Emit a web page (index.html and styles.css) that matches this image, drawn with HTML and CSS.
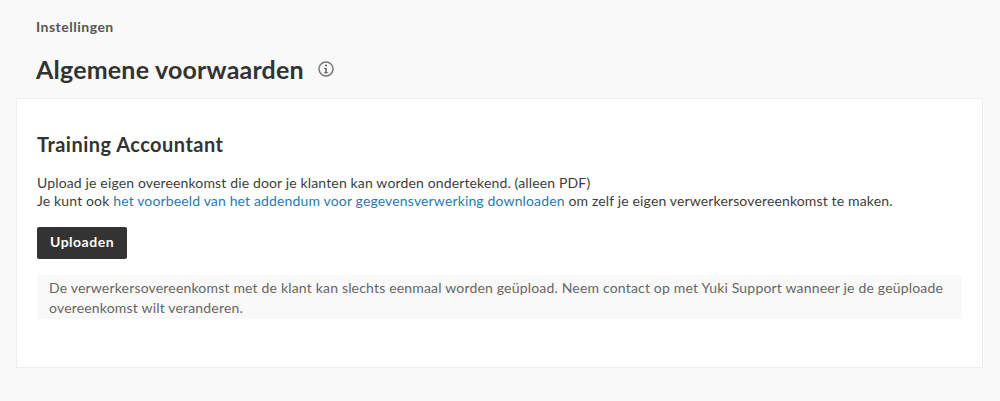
FILE: index.html
```html
<!DOCTYPE html>
<html lang="nl">
<head>
  <meta charset="UTF-8" />
  <title>Algemene voorwaarden</title>
  <link rel="stylesheet" href="styles.css">
</head>
<body>

<div class="crumb">Instellingen</div>

<div class="page-head">
  <h1>Algemene voorwaarden</h1>
  <svg class="info-icon" width="16" height="16" viewBox="0 0 16 16" aria-hidden="true">
    <circle cx="8" cy="8" r="7" fill="none" stroke="#777" stroke-width="1.5"/>
    <rect x="7" y="3.6" width="2" height="2" rx="1" fill="#555"/>
    <path d="M6.2 7h2.5v4.2h1.1v1H6.2v-1h1.1V8H6.2z" fill="#555"/>
  </svg>
</div>

<div class="card">
  <h2>Training Accountant</h2>
  <p class="intro">
    Upload je eigen overeenkomst die door je klanten kan worden ondertekend. (alleen PDF)<br>
    Je kunt ook <a href="#">het voorbeeld van het addendum voor gegevensverwerking downloaden</a> om zelf je eigen verwerkersovereenkomst te maken.
  </p>
  <button class="btn">Uploaden</button>
  <div class="notice">De verwerkersovereenkomst met de klant kan slechts eenmaal worden geüpload. Neem contact op met Yuki Support wanneer je de geüploade overeenkomst wilt veranderen.</div>
</div>

</body>
</html>
```

FILE: styles.css
```css
* {
  box-sizing: border-box;
}

body {
  margin: 0;
  padding: 17px 17px 0 16px;
  background-color: #f9f9f9;
  font-family: Lato, 'Noto Sans', sans-serif;
  font-size: 14px;
  color: #3d3d3d;
}

.crumb {
  margin-left: 20px;
  font-size: 14px;
  letter-spacing: 0.5px;
  line-height: 20px;
  font-weight: 700;
  color: #555;
}

.page-head {
  display: flex;
  align-items: center;
  gap: 14px;
  margin: 14px 0 11px 20px;
  height: 36px;
}

h1 {
  margin: 0;
  font-size: 25px;
  letter-spacing: 0.2px;
  font-weight: 700;
  color: #333;
}

.card {
  height: 270px;
  padding: 32px 20px 0;
  background-color: #fff;
  border: 1px solid #eee;
}

h2 {
  margin: 0 0 17px;
  font-size: 20px;
  letter-spacing: 0.47px;
  line-height: 26px;
  font-weight: 700;
  color: #333;
}

.intro {
  margin: 0 0 17px;
  line-height: 18px;
  letter-spacing: 0.145px;
}

.intro a {
  color: #2a7ab0;
  text-decoration: none;
}

.btn {
  display: block;
  width: 90px;
  height: 32px;
  padding: 0 0 3px;
  border: none;
  border-radius: 2px;
  background-color: #333;
  color: #fff;
  font-family: inherit;
  font-size: 14px;
  letter-spacing: 0.5px;
  font-weight: 700;
}

.notice {
  margin-top: 16px;
  padding: 3px 12px 1px;
  line-height: 20px;
  letter-spacing: 0.18px;
  background-color: #f9f9f9;
  color: #666;
}
```
